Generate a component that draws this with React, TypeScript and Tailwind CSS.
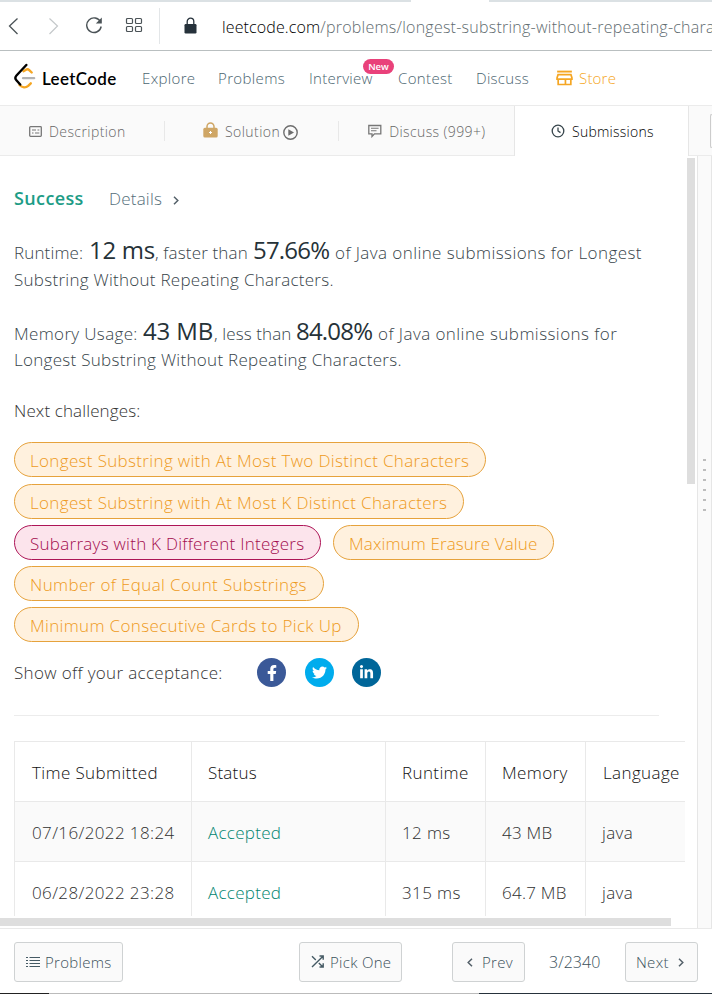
import type { ReactNode } from "react";
import { FaFacebookF, FaTwitter, FaLinkedinIn } from "react-icons/fa";

function BrowserBar() {
  return (
    <div className="h-[51px] border-b border-[#b9bfc0] bg-white">
      <div className="flex h-[2px]">
        <div className="w-[411px] bg-[#dbe1e4]" />
        <div className="w-[78px]" />
        <div className="flex-1 bg-[#dbe1e4]" />
      </div>
      <div className="flex h-12 items-center whitespace-nowrap">
        <svg className="ml-2 shrink-0" width="11" height="18" viewBox="0 0 11 18" fill="none" stroke="#4b5357" strokeWidth="1.3">
          <path d="M9.5 1.5 1.5 9l8 8" />
        </svg>
        <svg className="ml-[29px] shrink-0" width="11" height="18" viewBox="0 0 11 18" fill="none" stroke="#c4c8ca" strokeWidth="1.2">
          <path d="M1.5 1.500 9.500 9l-8 8" />
        </svg>
        <svg className="-mt-0.5 ml-[26px] shrink-0" width="18" height="18" viewBox="0 0 18 18" fill="none" stroke="#4b5357" strokeWidth="1.4">
          <path d="M15.600 6A7.300 7.300 0 1 0 16.200 10.500" />
          <path d="M16.800 1.500v6h-6z" fill="#4b5357" stroke="none" />
        </svg>
        <svg className="-mt-0.5 ml-[22px] shrink-0" width="18" height="16" viewBox="0 0 18 16" fill="none" stroke="#4b5357" strokeWidth="1.200">
          <rect x="1.500" y="1.500" width="6" height="5" rx="1" />
          <rect x="10.500" y="1.500" width="6" height="5" rx="1" />
          <rect x="1.500" y="9.500" width="6" height="5" rx="1" />
          <rect x="10.500" y="9.500" width="6" height="5" rx="1" />
        </svg>
        <div className="ml-4 h-9 w-px shrink-0 bg-[#e3e6e8]" />
        <svg className="-mt-0.5 ml-6 shrink-0" width="13" height="17" viewBox="0 0 13 17">
          <path d="M3.200 8V4.500a3.300 3.300 0 0 1 6.600 0V8" fill="none" stroke="#26323b" strokeWidth="1.300" />
          <rect x="0.500" y="7" width="12" height="9.500" rx="1.200" fill="#26323b" />
        </svg>
        <div className="ml-[25px] pt-px text-[16px] text-black">
          <span className="tracking-[0.12px]">leetcode.com</span>
          <span className="tracking-[0.24px] text-[#5f6c70]">/problems/longest-substring-without-repeating-charac</span>
        </div>
      </div>
    </div>
  );
}

function Logo() {
  return (
    <div className="flex w-[128px] shrink-0 items-center">
      <svg className="-mt-1 shrink-0" width="22" height="26" viewBox="0 0 22 26" fill="none" strokeWidth="2.400" strokeLinecap="round">
        <path d="M9.500 8.200 12 6.700c1.200-.7 2.300-.5 3.200.4l2.500 2.400" stroke="#f5a623" />
        <path d="M5.500 22c2.600 2.800 6.300 3 8.700.8l2.600-2.500" stroke="#f5a623" />
        <path d="M9 15.200h11.200" stroke="#b3b3b3" strokeWidth="2.200" />
        <path d="M12.300 2 2.500 12.500c-1.500 1.600-1.500 3.200-.1 4.700L6.200 21.500" stroke="#000" />
      </svg>
      <span className="ml-[6px] pt-px font-['Lato',sans-serif] text-[17px] font-semibold tracking-[0.35px] text-black">LeetCode</span>
    </div>
  );
}

function NavBar() {
  return (
    <div className="flex h-[54px] items-center whitespace-nowrap bg-white pl-3.5 text-[15px] tracking-[0.36px] text-[#4a646f]">
      <Logo />
      <span className="w-[76px]">Explore</span>
      <span className="w-[91px]">Problems</span>
      <span className="relative w-[89px] tracking-[0.28px]">
        Interview
        <span className="absolute -top-[8px] left-[54px] flex h-[15px] w-[31px] items-center justify-center rounded-full bg-[#e9417a] text-[9.500px] leading-none font-semibold tracking-[0px] text-white">New</span>
      </span>
      <span className="w-[78px]">Contest</span>
      <span className="w-[80px] tracking-[0.3px]">Discuss</span>
      <span className="flex items-center gap-1.5 tracking-[0.2px] text-[#f5a623]">
        <svg width="17" height="16" viewBox="0 0 18 16" fill="none" stroke="#f5a623" strokeWidth="1.800">
          <path d="M1.200 1.200h15.600" strokeWidth="2" />
          <path d="M2.200 4.400h13.600l1.100 3.600v1.200H1.100V8z" />
          <path d="M2.300 9v5.900h13.400V9M10 9v5.500" />
        </svg>
        Store
      </span>
    </div>
  );
}

function TabBar() {
  return (
    <div className="flex h-[51px] border-y border-[#ebebeb] bg-[#fafafa] text-[14px] text-[#666]">
      <div className="flex w-[514px] items-center whitespace-nowrap pt-px">
        <svg className="ml-[29px] shrink-0" width="13" height="11" viewBox="0 0 13 11" fill="none" stroke="#777" strokeWidth="1.300">
          <rect x="0.700" y="0.700" width="11.600" height="9.600" rx="0.800" />
          <path d="M3 4h4M8.500 4h1.800M3 7h1.500M6 7h4.300" strokeWidth="1.200" />
        </svg>
        <span className="ml-[7px] w-[115px] pt-px tracking-[0.42px]">Description</span>
        <span className="h-5 w-px bg-[#e8e8e8]" />
        <svg className="ml-[38px] -mt-0.5 shrink-0" width="15" height="16" viewBox="0 0 15 16">
          <path d="M4 7V4.500a3.500 3.500 0 0 1 7 0V7" fill="none" stroke="#cfa665" strokeWidth="1.500" />
          <rect x="0.300" y="5.800" width="14.400" height="9.800" rx="1.600" fill="#cfa665" />
          <path d="M7.500 9v3M6 10.500h3" stroke="#fff" strokeWidth="1" />
        </svg>
        <span className="ml-[7px] pt-px tracking-[0.45px]">Solution</span>
        <svg className="ml-[3px] mt-[3px] shrink-0" width="15" height="15" viewBox="0 0 15 15">
          <circle cx="7.500" cy="7.500" r="6.700" fill="none" stroke="#6d6d6d" strokeWidth="1.400" />
          <path d="M5.300 4.300 11 7.500l-5.700 3.200z" fill="#6d6d6d" />
        </svg>
        <span className="ml-[40px] h-5 w-px bg-[#e8e8e8]" />
        <svg className="ml-[29px] shrink-0" width="14" height="14" viewBox="0 0 14 14" fill="none" stroke="#777" strokeWidth="1.300">
          <path d="M.8 1.500h12v8.300H6.500L4 12.500V9.800H.8z" />
          <path d="M3 4.200h7.600M3 6.800h5.500" strokeWidth="1.100" />
        </svg>
        <span className="ml-[7px] pt-px tracking-[0.4px]">Discuss (999+)</span>
      </div>
      <div className="-mb-px flex w-[175px] items-center border-x border-[#e6e6e6] bg-white text-black">
        <svg className="ml-9 shrink-0" width="14" height="14" viewBox="0 0 14 14" fill="none" stroke="#37454c" strokeWidth="1.300">
          <circle cx="7" cy="7" r="5.800" />
          <path d="M7 3.500V7l2.500 1.600" />
        </svg>
        <span className="ml-[7px] pt-px tracking-[0.25px]">Submissions</span>
      </div>
      <div className="flex flex-1 items-center justify-end">
        <div className="h-[34px] w-0.5 rounded-l-sm border border-r-0 border-[#ccc]" />
      </div>
    </div>
  );
}

function Pill({ children, className }: { children: ReactNode; className: string }) {
  return <span className={`flex h-[35px] shrink-0 items-center rounded-full border pl-[15px] pt-[2px] ${className}`}>{children}</span>;
}
const orange = "border-[#e6a23c] bg-[#fff1de] text-[#ee9a1c]";

const submissions = [
  ["07/16/2022 18:24", "12 ms", "43 MB", "java"],
  ["06/28/2022 23:28", "315 ms", "64.7 MB", "java"],
];

function SubmissionTable() {
  return (
    <div className="mt-[25px] flex h-[175px] flex-col overflow-hidden border-l border-t border-[#e9e9e9] tracking-[0.38px]">
      <div className="grid h-[60px] shrink-0 grid-cols-[177px_194px_100px_100px_100px] border-b border-[#e9e9e9] leading-[61px] text-[#111]">
        <span className="border-r border-[#e9e9e9] pl-[17px]">Time Submitted</span>
        <span className="border-r border-[#e9e9e9] pl-4 tracking-[0.2px]">Status</span>
        <span className="border-r border-[#e9e9e9] pl-4">Runtime</span>
        <span className="border-r border-[#e9e9e9] pl-4">Memory</span>
        <span className="pl-[17px]">Language</span>
      </div>
      {submissions.map(([time, runtime, memory, language]) => (
        <div key={time} className="grid h-[60px] shrink-0 grid-cols-[177px_194px_100px_100px_100px] border-b border-[#e9e9e9] leading-[61px] text-[#303030] even:bg-[#fafafa]">
          <span className="border-r border-[#e9e9e9] pl-[17px]">{time}</span>
          <span className="border-r border-[#e9e9e9] pl-4 tracking-[0.28px] text-[#008570]">Accepted</span>
          <span className="border-r border-[#e9e9e9] pl-4">{runtime}</span>
          <span className="border-r border-[#e9e9e9] pl-4 tracking-[0.25px]">{memory}</span>
          <span className="pl-4">{language}</span>
        </div>
      ))}
    </div>
  );
}

function Chevron({ left = false }: { left?: boolean }) {
  return (
    <svg className="shrink-0" width="6" height="9" viewBox="0 0 6 9" fill="none" stroke="#546069" strokeWidth="1.500">
      <path d={left ? "M5 .8 1.200 4.500 5 8.200" : "M1 .8l3.800 3.700L1 8.200"} />
    </svg>
  );
}

function Result() {
  return (
    <div className="w-[685px] pl-3.5 text-[17px] tracking-[0.3px] text-[#37444a]">
      <div className="mt-[29px] flex h-[26px] items-center">
        <span className="w-[95px] text-[18px] font-semibold tracking-[0.38px] text-[#1d9c86]">Success</span>
        <span className="w-[64px] pt-px tracking-[0.2px] text-[#546e7a]">Details</span>
        <div className="pt-1"><Chevron /></div>
      </div>
      <div className="mt-[25px] flex h-[27px] items-baseline leading-[27px]">
        <span className="w-[75px] tracking-[0.15px]">Runtime:</span>
        <span className="w-[66px] text-[24px] font-normal tracking-[-0.3px] text-[#263238]">12 ms</span>
        <span className="w-[98px] tracking-[0.15px]">, faster than</span>
        <span className="w-[82px] text-[24px] font-normal tracking-[-0.8px] text-[#263238]">57.66%</span>
        <span className="tracking-[0.42px]">of Java online submissions for Longest</span>
      </div>
      <div className="mt-[3px] h-6 leading-[27px] tracking-[0.27px]">Substring Without Repeating Characters.</div>
      <div className="mt-[27px] flex h-[27px] items-baseline leading-[27px]">
        <span className="w-[129px] tracking-[0.35px]">Memory Usage:</span>
        <span className="w-[71px] text-[24px] font-normal tracking-[-0.15px] text-[#263238]">43 MB</span>
        <span className="w-[82px] tracking-[0.1px]">, less than</span>
        <span className="w-[82px] text-[24px] font-normal tracking-[-0.8px] text-[#263238]">84.08%</span>
        <span className="tracking-[0.44px]">of Java online submissions for</span>
      </div>
      <div className="mt-[3px] h-6 leading-[25px] tracking-[0.29px]">Longest Substring Without Repeating Characters.</div>
      <div className="mt-[26px] h-[27px] leading-[27px] tracking-[0.12px] text-[#333]">Next challenges:</div>
      <div className="mt-[18px] flex flex-col items-start gap-1.5">
        <Pill className={`mb-px w-[472px] tracking-[0.34px] ${orange}`}>Longest Substring with At Most Two Distinct Characters</Pill>
        <Pill className={`w-[450px] tracking-[0.34px] ${orange}`}>Longest Substring with At Most K Distinct Characters</Pill>
        <div className="flex gap-3">
          <Pill className="w-[307px] border-[#ad1457] bg-[#fce4ec] tracking-[0.27px] text-[#a30d4e]">Subarrays with K Different Integers</Pill>
          <Pill className={`w-[221px] tracking-[0.12px] ${orange}`}>Maximum Erasure Value</Pill>
        </div>
        <Pill className={`w-[310px] tracking-[0.37px] ${orange}`}>Number of Equal Count Substrings</Pill>
        <Pill className={`w-[345px] tracking-[0.34px] ${orange}`}>Minimum Consecutive Cards to Pick Up</Pill>
      </div>
      <div className="mt-4 flex h-[29px] items-center text-white">
        <span className="w-[243px] tracking-[0.34px] text-[#333]">Show off your acceptance:</span>
        <span className="flex size-[29px] items-center justify-center rounded-full bg-[#3b5998]"><FaFacebookF size={16} /></span>
        <span className="ml-[19px] flex size-[29px] items-center justify-center rounded-full bg-[#00aced]"><FaTwitter size={15} /></span>
        <span className="ml-[18px] flex size-[29px] items-center justify-center rounded-full bg-[#006699]"><FaLinkedinIn size={15} /></span>
      </div>
      <div className="mt-7 h-px w-[645px] bg-[#ececec]" />
      <SubmissionTable />
    </div>
  );
}

function FooterButton({ children, className }: { children: ReactNode; className: string }) {
  return <button className={`flex h-10 shrink-0 items-center rounded-[3px] border border-[#cfd2d3] bg-[#fafafa] ${className}`}>{children}</button>;
}

function Footer() {
  return (
    <div className="h-[66px] border-t border-[#e9e9e9] bg-white">
      <div className="mt-[13px] flex h-10 items-center whitespace-nowrap text-[15px] tracking-[0.3px] text-[#3c515b]">
        <FooterButton className="ml-3.5 w-[109px] pl-[11px]">
          <svg className="-mt-px" width="14" height="12" viewBox="0 0 14 12" stroke="#455a64" strokeWidth="1.200">
            <path d="M0 1.500h2M0 4.500h2M0 7.500h2M0 10.500h2M3.500 1.500H14M3.500 4.500H14M3.500 7.500H14M3.500 10.500H14" />
          </svg>
          <span className="ml-[5px]">Problems</span>
        </FooterButton>
        <FooterButton className="ml-[176px] w-[103px] pl-[11px]">
          <svg className="-mt-px" width="14" height="13" viewBox="0 0 14 13" fill="none" stroke="#455a64" strokeWidth="1.400">
            <path d="M1 1.200 4.800 5M7.800 8 12 12M1 12 12 1.200M8.500 1h3.700v3.700M8.500 12h3.700V8.300" />
          </svg>
          <span className="ml-[5px]">Pick One</span>
        </FooterButton>
        <FooterButton className="ml-[50px] w-[73px] pl-3.5">
          <Chevron left />
          <span className="ml-[9px]">Prev</span>
        </FooterButton>
        <span className="ml-6 w-[76px] text-[16px] tracking-[0.05px]">3/2340</span>
        <FooterButton className="w-[73px] pl-[10px]">
          <span className="mr-[9px]">Next</span>
          <Chevron />
        </FooterButton>
      </div>
      <div className="mt-[11px] flex h-px">
        <div className="w-[49px] bg-[#222]" />
        <div className="w-[430px] bg-[#bbb]" />
        <div className="flex-1 bg-[#26323b]" />
      </div>
    </div>
  );
}

export default function App() {
  return (
    <div className="flex h-[994px] w-[712px] flex-col overflow-hidden bg-white font-['Open_Sans',sans-serif] font-light">
      <BrowserBar />
      <NavBar />
      <TabBar />
      <div className="flex h-[772px]">
        <div className="flex w-[698px] flex-col border-r border-[#e6e6e6]">
          <div className="flex h-[760px]">
            <div className="w-[685px] overflow-hidden whitespace-nowrap">
              <Result />
            </div>
            <div className="ml-0.5 mt-0.5 h-[326px] w-2 bg-[#dedede]" />
          </div>
          <div className="mt-0.5 h-2 w-[671px] bg-[#dedede]" />
        </div>
        <div className="flex flex-1 flex-col items-center gap-2 border-r border-[#e6e6e6] bg-[#fafafa] pt-[303px]">
          <span className="h-0.5 w-[3px] bg-[#bdbdbd]" />
          <span className="h-0.5 w-[3px] bg-[#bdbdbd]" />
          <span className="h-0.5 w-[3px] bg-[#bdbdbd]" />
          <span className="h-0.5 w-[3px] bg-[#bdbdbd]" />
          <span className="h-0.5 w-[3px] bg-[#bdbdbd]" />
          <span className="h-0.5 w-[3px] bg-[#bdbdbd]" />
        </div>
      </div>
      <Footer />
    </div>
  );
}
